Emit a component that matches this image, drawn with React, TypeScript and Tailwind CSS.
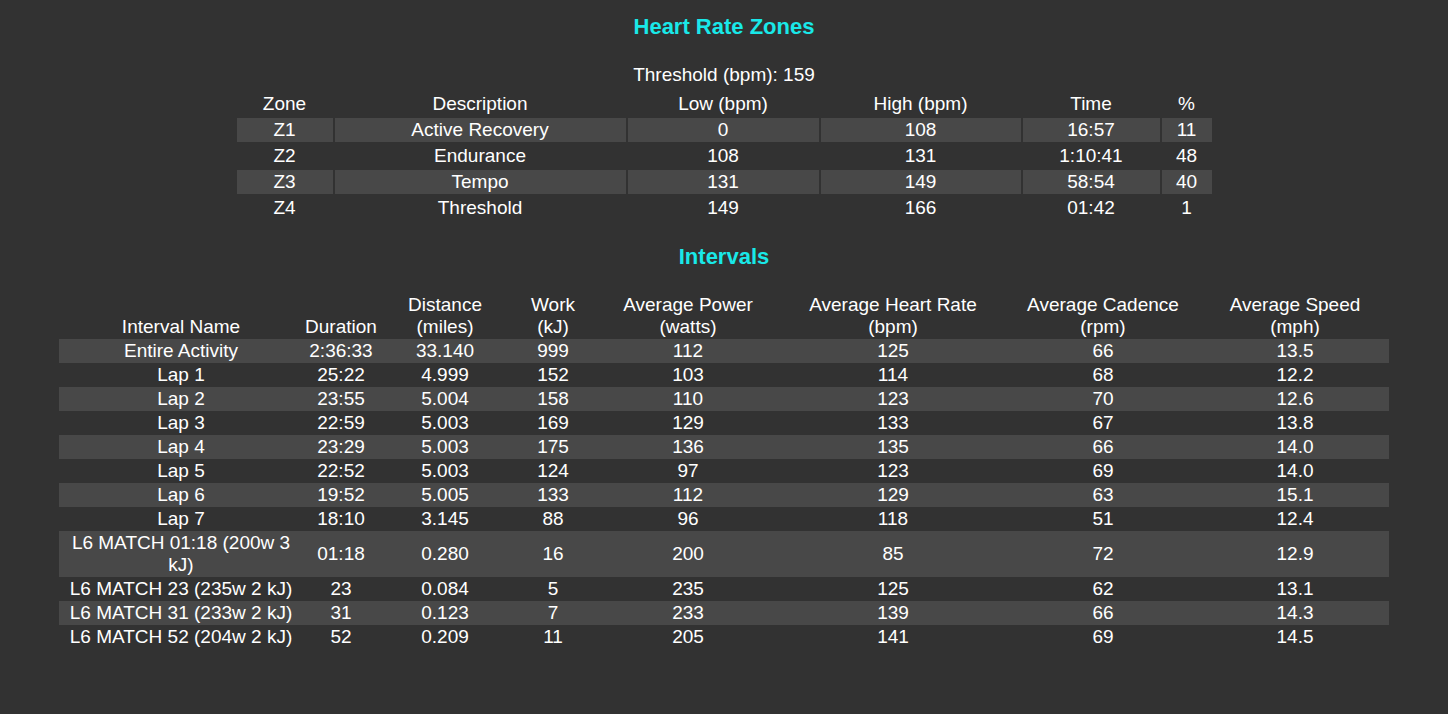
import React from 'react';

// ─── Data ───────────────────────────────────────────────────────────────────

const ZONES = [
  ['Z1', 'Active Recovery', '0', '108', '16:57', '11'],
  ['Z2', 'Endurance', '108', '131', '1:10:41', '48'],
  ['Z3', 'Tempo', '131', '149', '58:54', '40'],
  ['Z4', 'Threshold', '149', '166', '01:42', '1'],
];

const ZONE_COLS = [
  { label: 'Zone', w: 'w-[96px]' },
  { label: 'Description', w: 'w-[291px]' },
  { label: 'Low (bpm)', w: 'w-[191px]' },
  { label: 'High (bpm)', w: 'w-[200px]' },
  { label: 'Time', w: 'w-[137px]' },
  { label: '%', w: 'w-[50px]' },
];

const INTERVAL_COLS: { label: string[]; w: string }[] = [
  { label: ['Interval Name'], w: 'w-[244px]' },
  { label: ['Duration'], w: 'w-[76px]' },
  { label: ['Distance', '(miles)'], w: 'w-[132px]' },
  { label: ['Work', '(kJ)'], w: 'w-[84px]' },
  { label: ['Average Power', '(watts)'], w: 'w-[186px]' },
  { label: ['Average Heart Rate', '(bpm)'], w: 'w-[224px]' },
  { label: ['Average Cadence', '(rpm)'], w: 'w-[196px]' },
  { label: ['Average Speed', '(mph)'], w: 'w-[188px]' },
];

const INTERVALS = [
  ['Entire Activity', '2:36:33', '33.140', '999', '112', '125', '66', '13.5'],
  ['Lap 1', '25:22', '4.999', '152', '103', '114', '68', '12.2'],
  ['Lap 2', '23:55', '5.004', '158', '110', '123', '70', '12.6'],
  ['Lap 3', '22:59', '5.003', '169', '129', '133', '67', '13.8'],
  ['Lap 4', '23:29', '5.003', '175', '136', '135', '66', '14.0'],
  ['Lap 5', '22:52', '5.003', '124', '97', '123', '69', '14.0'],
  ['Lap 6', '19:52', '5.005', '133', '112', '129', '63', '15.1'],
  ['Lap 7', '18:10', '3.145', '88', '96', '118', '51', '12.4'],
  ['L6 MATCH 01:18 (200w 3 kJ)', '01:18', '0.280', '16', '200', '85', '72', '12.9'],
  ['L6 MATCH 23 (235w 2 kJ)', '23', '0.084', '5', '235', '125', '62', '13.1'],
  ['L6 MATCH 31 (233w 2 kJ)', '31', '0.123', '7', '233', '139', '66', '14.3'],
  ['L6 MATCH 52 (204w 2 kJ)', '52', '0.209', '11', '205', '141', '69', '14.5'],
];

// ─── Pieces ─────────────────────────────────────────────────────────────────

const SectionTitle: React.FC<{ children: React.ReactNode }> = ({ children }) => (
  <h3 className="text-center text-[22px] leading-[26px] font-bold text-[#19e8e8]">{children}</h3>
);

export default function App() {
  return (
    <div className="min-h-screen bg-[#323232] text-white font-['Liberation_Sans',Arial,sans-serif] text-[19px] leading-[22px] pt-[14px]">
      <SectionTitle>Heart Rate Zones</SectionTitle>

      {/* Zones */}
      <div className="mt-[24px] text-center">Threshold (bpm): 159</div>
      <table className="mx-auto mt-[4px] table-fixed border-separate border-spacing-[2px]">
        <thead>
          <tr>
            {ZONE_COLS.map((c) => (
              <th key={c.label} className={`${c.w} py-[1px] font-normal text-center`}>
                {c.label}
              </th>
            ))}
          </tr>
        </thead>
        <tbody>
          {ZONES.map((row, i) => (
            <tr key={row[0]}>
              {row.map((cell, j) => (
                <td
                  key={j}
                  className={`py-[1px] text-center ${i % 2 === 0 ? 'bg-[#484848]' : ''}`}
                >
                  {cell}
                </td>
              ))}
            </tr>
          ))}
        </tbody>
      </table>

      {/* Intervals */}
      <div className="mt-[22px]">
        <SectionTitle>Intervals</SectionTitle>
      </div>
      <table className="mx-auto mt-[23px] table-fixed border-collapse">
        <thead>
          <tr>
            {INTERVAL_COLS.map((c) => (
              <th key={c.label[0]} className={`${c.w} py-[1px] px-0 font-normal text-center align-bottom`}>
                {c.label.map((l) => (
                  <div key={l}>{l}</div>
                ))}
              </th>
            ))}
          </tr>
        </thead>
        <tbody>
          {INTERVALS.map((row, i) => (
            <tr key={row[0]} className={i % 2 === 0 ? 'bg-[#484848]' : ''}>
              {row.map((cell, j) => (
                <td key={j} className="py-[1px] px-0 text-center align-middle">
                  {cell}
                </td>
              ))}
            </tr>
          ))}
        </tbody>
      </table>
    </div>
  );
}
